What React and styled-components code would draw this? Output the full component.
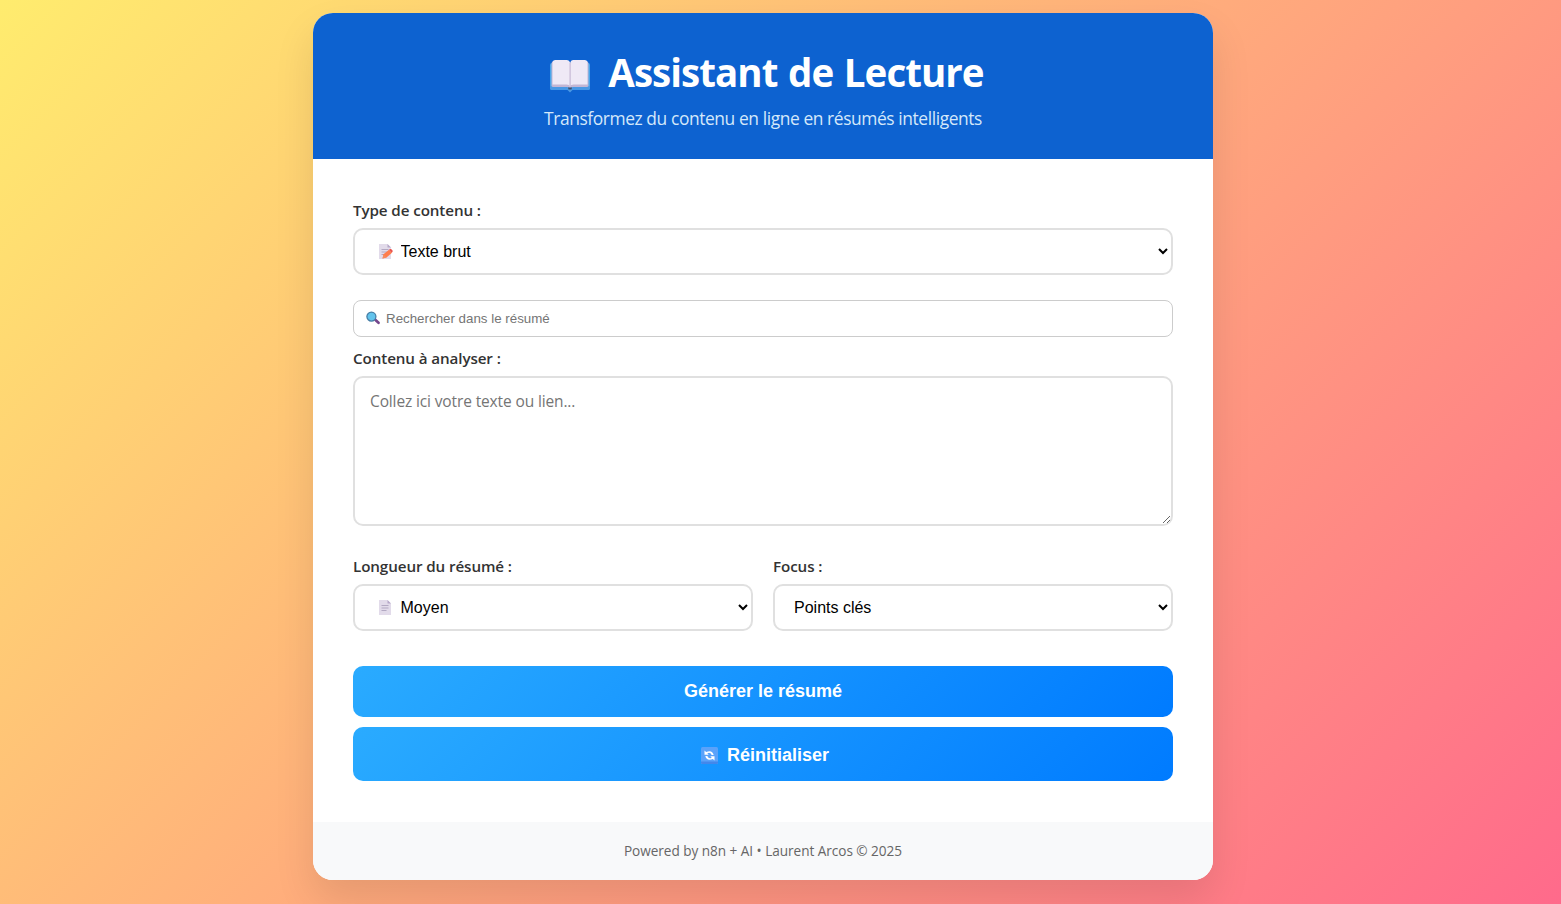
import React from "react";
import styled, { createGlobalStyle } from "styled-components";

const Global = createGlobalStyle`
  * { box-sizing: border-box; margin: 0; padding: 0; }
  body {
    font-family: "Open Sans", "Noto Sans", sans-serif;
    background: linear-gradient(135deg, #ffec6e 0%, #ffab7c 50%, #ff6a8b 100%);
    height: 904px;
    overflow: hidden;
    padding-top: 13px;
  }
`;

const Card = styled.main`
  width: 900px;
  height: 867px;
  margin: 0 0 0 313px;
  background: #fff;
  border-radius: 20px;
  overflow: hidden;
  box-shadow: 0 20px 40px rgba(0, 0, 0, 0.1);
  display: flex;
  flex-direction: column;
`;

const Header = styled.header`
  height: 146px;
  padding-top: 29px;
  background: #0d62d0;
  color: #fff;
  display: flex;
  flex-direction: column;
  align-items: center;
`;

const Title = styled.h1`
  height: 60px;
  padding-left: 7px;
  display: flex;
  align-items: center;
  gap: 17px;
  font-size: 38.5px;
  line-height: 60px;
  font-weight: 700;
  letter-spacing: -0.95px;
  word-spacing: 1.5px;
  white-space: nowrap;
`;

const Subtitle = styled.p`
  margin-top: 4px;
  font-size: 17.4px;
  line-height: 24px;
  letter-spacing: -0.41px;
  color: #d4e8fa;
  white-space: nowrap;
`;

const Body = styled.section`
  height: 663px;
  padding: 40px 40px 0;
`;

const Label = styled.label`
  display: block;
  height: 21px;
  margin-bottom: 8px;
  font-size: 15.2px;
  line-height: 23px;
  font-weight: 600;
  letter-spacing: -0.1px;
  color: #333;
`;

const Field = styled.div`
  position: relative;
  margin-bottom: ${(p) => p.$gap || 0}px;
`;

const FieldIcon = styled.span`
  position: absolute;
  left: ${(p) => p.$left}px;
  top: ${(p) => p.$top}px;
  display: flex;
`;

const Select = styled.select`
  display: block;
  width: 100%;
  height: 47px;
  padding: 0 0 0 ${(p) => (p.$icon ? 41.5 : 15)}px;
  border: 2px solid #e0e0e0;
  border-radius: 10px;
  background-color: #fff;
  color: #000;
  font: 16px "Liberation Sans", Arial, sans-serif;
`;

const Search = styled.input`
  display: block;
  width: 100%;
  height: 37px;
  padding: 0 10px 0 32px;
  border: 1px solid #ccc;
  border-radius: 8px;
  font: 13.333px "Liberation Sans", Arial, sans-serif;
  &::placeholder { color: #757575; }
`;

const TextArea = styled.textarea`
  display: block;
  width: 100%;
  height: 150px;
  padding: 11px 15px;
  border: 2px solid #e0e0e0;
  border-radius: 10px;
  font: 15.5px/24px "Open Sans", "Noto Sans", sans-serif;
  letter-spacing: -0.13px;
  resize: vertical;
  &::placeholder { color: #757575; }
`;

const Columns = styled.div`
  display: grid;
  grid-template-columns: 1fr 1fr;
  gap: 20px;
  margin-bottom: 35px;
`;

const Button = styled.button`
  display: flex;
  align-items: center;
  justify-content: center;
  gap: 9px;
  width: 100%;
  height: ${(p) => p.$height}px;
  padding: ${(p) => (p.$withIcon ? "2px 0 0 4px" : 0)};
  margin-bottom: 10px;
  border: 0;
  border-radius: 10px;
  background: linear-gradient(135deg, #2aabff, #007bff);
  color: #fff;
  font: 700 18px "Liberation Sans", Arial, sans-serif;
`;

const Footer = styled.footer`
  height: 58px;
  background: #f8f9fa;
  color: #666;
  text-align: center;
  font-size: 13.6px;
  line-height: 58px;
  letter-spacing: -0.04px;
`;

const Book = styled.svg`
  position: relative;
  top: 4px;
`;

const BookIcon = () => (
  <Book width="42" height="34" viewBox="0 0 42 34">
    <rect x="1" y="4" width="40" height="27" rx="2" fill="#4ba6ea" />
    <path d="M1 27h40v2q0 2-2 2H23.500l-2.500 2.500-2.500-2.500H3q-2 0-2-2z" fill="#4a98e4" />
    <path d="M2.500 27V5q0-3 3-3h12q3 0 3.500 2Q21.500 2 24.500 2h12q3 0 3 3v22q0 1-2 1H24.500q-2 0-3.500 1Q19.500 28 17.500 28H4.500q-2 0-2-1z" fill="#c3b6d4" />
    <path d="M3.500 25V4q0-3 3-3h11q3 0 3.500 3v23Q20.500 25.500 17.500 25.500H3.500zM21.500 27V4q0-3 3-3h11q3 0 3 3v21.500H24.500q-3 0-3 1.500z" fill="#efe9f6" />
    <path d="M21 4v24" stroke="#cdc1da" strokeWidth="1.200" />
    <path d="M19 28.500h4l-.5 2h-3z" fill="#40516f" />
  </Book>
);

const PageIcon = ({ pencil }) => (
  <svg width="16" height="17" viewBox="0 0 16 17">
    <path d="M0 1h8.500l3.500 3.500V16H0z" fill="#e2dbea" />
    <path d="M8.500 1v3.500H12z" fill="#b6a8c8" />
    <path d="M2.500 6.500h7M2.500 9h7M2.500 11.500h5" stroke="#b3a9c3" strokeWidth="1" />
    {pencil && (
      <>
        <path d="M3.500 15.500l1-4.200 5.500-4.500 3 3-5.500 4.700z" fill="#ff7d4d" />
        <path d="M10 6.800l1-.7q1-.5 2 .7t.6 2l-.9.900z" fill="#e9544e" />
        <path d="M3.500 15.500l1-4.200 3 3.200z" fill="#f58a60" />
      </>
    )}
  </svg>
);

const SearchIcon = () => (
  <svg width="15" height="14" viewBox="0 0 15 14">
    <path d="M9.500 9l3 2.700" stroke="#75478c" strokeWidth="2.800" strokeLinecap="round" />
    <circle cx="5.400" cy="5.600" r="4.500" fill="#62c3ec" stroke="#457ea6" strokeWidth="1.300" />
  </svg>
);

const ResetIcon = () => (
  <svg width="17" height="17" viewBox="0 0 17 17">
    <rect width="17" height="17" rx="1.500" fill="#5aa2fa" />
    <path d="M0 14.500h17v1q0 1.500-1.500 1.500h-14Q0 17 0 15.500z" fill="#4387ea" />
    <path d="M3.500 3.500v4.200h4.200L6.300 6.300q2.800-1.800 4.400 1.700h2q-1.500-5.600-7.600-3zM13.500 13.500V9.300H9.300l1.400 1.400Q7.900 12.500 6.300 9h-2q1.500 5.600 7.600 3z" fill="#fff" />
  </svg>
);

export default function App() {
  return (
    <>
      <Global />
      <Card>
        <Header>
          <Title><BookIcon /><span>Assistant de Lecture</span></Title>
          <Subtitle>Transformez du contenu en ligne en résumés intelligents</Subtitle>
        </Header>
        <Body>
          <Label>Type de contenu :</Label>
          <Field $gap={25}>
            <Select $icon><option>Texte brut</option></Select>
            <FieldIcon $left={26} $top={15}><PageIcon pencil /></FieldIcon>
          </Field>
          <Field $gap={10}>
            <Search placeholder="Rechercher dans le résumé" />
            <FieldIcon $left={13} $top={11}><SearchIcon /></FieldIcon>
          </Field>
          <Label>Contenu à analyser :</Label>
          <Field $gap={29}>
            <TextArea placeholder="Collez ici votre texte ou lien..." />
          </Field>
          <Columns>
            <div>
              <Label>Longueur du résumé :</Label>
              <Field>
                <Select $icon><option>Moyen</option></Select>
                <FieldIcon $left={26} $top={15}><PageIcon /></FieldIcon>
              </Field>
            </div>
            <div>
              <Label>Focus :</Label>
              <Select><option>Points clés</option></Select>
            </div>
          </Columns>
          <Button $height={51}>Générer le résumé</Button>
          <Button $height={54} $withIcon><ResetIcon />Réinitialiser</Button>
        </Body>
        <Footer>Powered by n8n + AI • Laurent Arcos © 2025</Footer>
      </Card>
    </>
  );
}
